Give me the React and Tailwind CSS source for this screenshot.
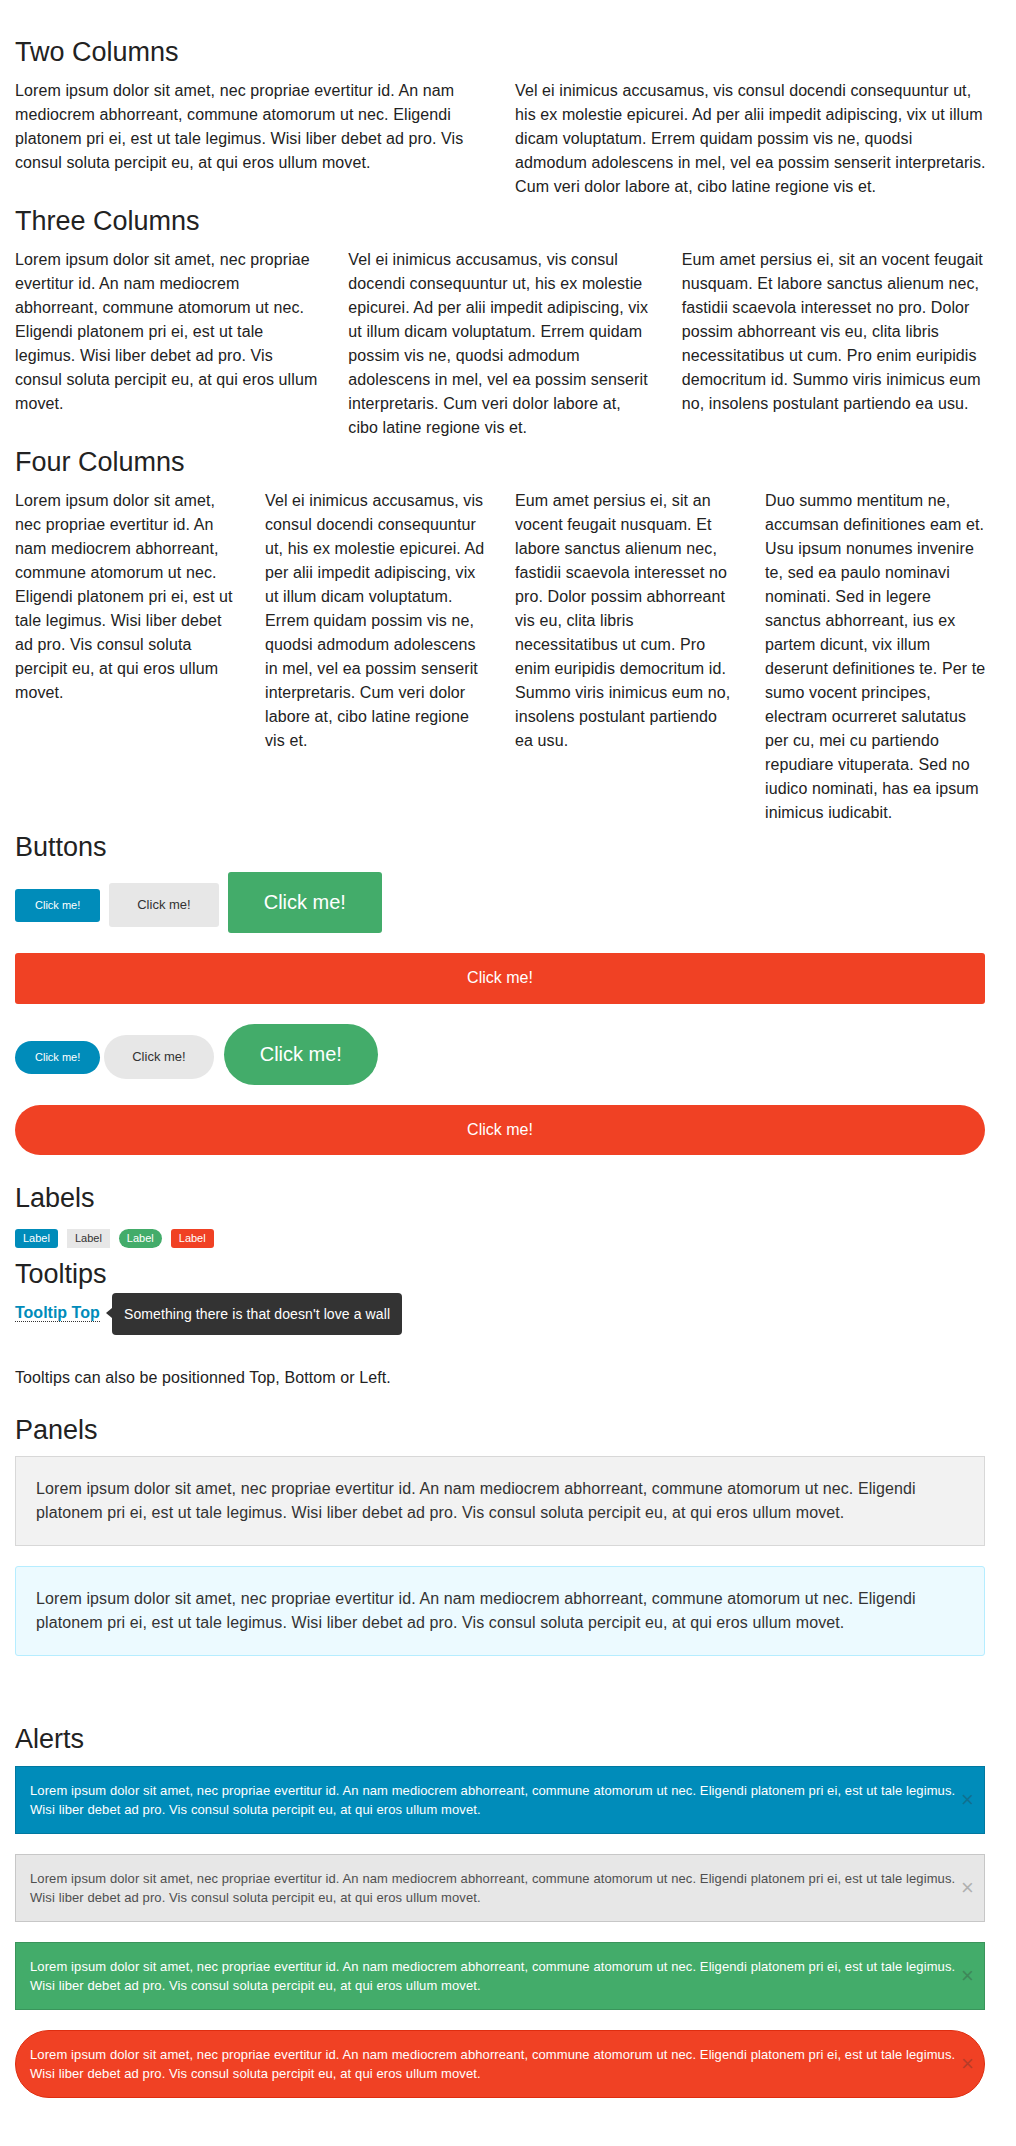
const LOREM_2 = [
  "Lorem ipsum dolor sit amet, nec propriae evertitur id. An nam",
  "mediocrem abhorreant, commune atomorum ut nec. Eligendi",
  "platonem pri ei, est ut tale legimus. Wisi liber debet ad pro. Vis",
  "consul soluta percipit eu, at qui eros ullum movet.",
];
const VEL_2 = [
  "Vel ei inimicus accusamus, vis consul docendi consequuntur ut,",
  "his ex molestie epicurei. Ad per alii impedit adipiscing, vix ut illum",
  "dicam voluptatum. Errem quidam possim vis ne, quodsi",
  "admodum adolescens in mel, vel ea possim senserit interpretaris.",
  "Cum veri dolor labore at, cibo latine regione vis et.",
];

const LOREM_3 = [
  "Lorem ipsum dolor sit amet, nec propriae",
  "evertitur id. An nam mediocrem",
  "abhorreant, commune atomorum ut nec.",
  "Eligendi platonem pri ei, est ut tale",
  "legimus. Wisi liber debet ad pro. Vis",
  "consul soluta percipit eu, at qui eros ullum",
  "movet.",
];
const VEL_3 = [
  "Vel ei inimicus accusamus, vis consul",
  "docendi consequuntur ut, his ex molestie",
  "epicurei. Ad per alii impedit adipiscing, vix",
  "ut illum dicam voluptatum. Errem quidam",
  "possim vis ne, quodsi admodum",
  "adolescens in mel, vel ea possim senserit",
  "interpretaris. Cum veri dolor labore at,",
  "cibo latine regione vis et.",
];
const EUM_3 = [
  "Eum amet persius ei, sit an vocent feugait",
  "nusquam. Et labore sanctus alienum nec,",
  "fastidii scaevola interesset no pro. Dolor",
  "possim abhorreant vis eu, clita libris",
  "necessitatibus ut cum. Pro enim euripidis",
  "democritum id. Summo viris inimicus eum",
  "no, insolens postulant partiendo ea usu.",
];

const LOREM_4 = [
  "Lorem ipsum dolor sit amet,",
  "nec propriae evertitur id. An",
  "nam mediocrem abhorreant,",
  "commune atomorum ut nec.",
  "Eligendi platonem pri ei, est ut",
  "tale legimus. Wisi liber debet",
  "ad pro. Vis consul soluta",
  "percipit eu, at qui eros ullum",
  "movet.",
];
const VEL_4 = [
  "Vel ei inimicus accusamus, vis",
  "consul docendi consequuntur",
  "ut, his ex molestie epicurei. Ad",
  "per alii impedit adipiscing, vix",
  "ut illum dicam voluptatum.",
  "Errem quidam possim vis ne,",
  "quodsi admodum adolescens",
  "in mel, vel ea possim senserit",
  "interpretaris. Cum veri dolor",
  "labore at, cibo latine regione",
  "vis et.",
];
const EUM_4 = [
  "Eum amet persius ei, sit an",
  "vocent feugait nusquam. Et",
  "labore sanctus alienum nec,",
  "fastidii scaevola interesset no",
  "pro. Dolor possim abhorreant",
  "vis eu, clita libris",
  "necessitatibus ut cum. Pro",
  "enim euripidis democritum id.",
  "Summo viris inimicus eum no,",
  "insolens postulant partiendo",
  "ea usu.",
];
const DUO_4 = [
  "Duo summo mentitum ne,",
  "accumsan definitiones eam et.",
  "Usu ipsum nonumes invenire",
  "te, sed ea paulo nominavi",
  "nominati. Sed in legere",
  "sanctus abhorreant, ius ex",
  "partem dicunt, vix illum",
  "deserunt definitiones te. Per te",
  "sumo vocent principes,",
  "electram ocurreret salutatus",
  "per cu, mei cu partiendo",
  "repudiare vituperata. Sed no",
  "iudico nominati, has ea ipsum",
  "inimicus iudicabit.",
];

const PANEL = [
  "Lorem ipsum dolor sit amet, nec propriae evertitur id. An nam mediocrem abhorreant, commune atomorum ut nec. Eligendi",
  "platonem pri ei, est ut tale legimus. Wisi liber debet ad pro. Vis consul soluta percipit eu, at qui eros ullum movet.",
];
const ALERT = [
  "Lorem ipsum dolor sit amet, nec propriae evertitur id. An nam mediocrem abhorreant, commune atomorum ut nec. Eligendi platonem pri ei, est ut tale legimus.",
  "Wisi liber debet ad pro. Vis consul soluta percipit eu, at qui eros ullum movet.",
];

function Lines({ lines }) {
  return lines.map((l, i) => (
    <span key={i} className="block whitespace-nowrap">
      {l}
    </span>
  ));
}

function Heading({ children, className = "" }) {
  return <h3 className={`px-[15px] text-[27px] leading-[42px] font-normal text-[#222] ${className}`}>{children}</h3>;
}

function Columns({ cols, items }) {
  return (
    <div className={`mt-[6px] grid ${cols}`}>
      {items.map((lines, i) => (
        <p key={i} className="px-[15px] text-[16px] leading-[24px] tracking-[0.1px] text-[#222]">
          <Lines lines={lines} />
        </p>
      ))}
    </div>
  );
}

function Alert({ className }) {
  return (
    <div className={`relative border pt-[14px] pb-[14px] pl-[14px] pr-[24px] text-[13px] leading-[19px] tracking-[0.1px] ${className}`}>
      <Lines lines={ALERT} />
      <span className="absolute right-[10px] top-1/2 -translate-y-1/2 text-[22px] leading-[20px] text-[#333] opacity-30">
        ×
      </span>
    </div>
  );
}

export default function App() {
  return (
    <div className="w-[1000px] bg-white pt-[31px] pb-[49px] font-['Liberation_Sans',Arial,sans-serif] text-[#222]">
      <Heading>Two Columns</Heading>
      <Columns cols="grid-cols-2" items={[LOREM_2, VEL_2]} />

      <Heading className="mt-px">Three Columns</Heading>
      <Columns cols="grid-cols-3" items={[LOREM_3, VEL_3, EUM_3]} />

      <Heading className="mt-px">Four Columns</Heading>
      <Columns cols="grid-cols-4" items={[LOREM_4, VEL_4, EUM_4, DUO_4]} />

      <Heading className="mt-px">Buttons</Heading>
      <div className="px-[15px]">
        <div className="mt-[4px] flex items-baseline">
          <button className="rounded-[3px] bg-[#008cba] px-[20px] pt-[10px] pb-[11px] text-[11px] leading-[12px] text-white">
            Click me!
          </button>
          <button className="ml-[9px] rounded-[3px] bg-[#e7e7e7] px-[28px] pt-[14px] pb-[15px] text-[13px] leading-[15px] text-[#333]">
            Click me!
          </button>
          <button className="ml-[9px] rounded-[3px] bg-[#43ac6a] px-[36px] pt-[18px] pb-[19px] text-[20px] leading-[24px] text-white">
            Click me!
          </button>
        </div>
        <button className="mt-[20px] block w-full rounded-[3px] bg-[#f04124] pt-[16px] pb-[17px] text-[16px] leading-[18px] text-white">
          Click me!
        </button>
        <div className="mt-[20px] flex items-baseline">
          <button className="rounded-full bg-[#008cba] px-[20px] pt-[10px] pb-[11px] text-[11px] leading-[12px] text-white">
            Click me!
          </button>
          <button className="ml-[4px] rounded-full bg-[#e7e7e7] px-[28px] pt-[14px] pb-[15px] text-[13px] leading-[15px] text-[#333]">
            Click me!
          </button>
          <button className="ml-[10px] rounded-full bg-[#43ac6a] px-[36px] pt-[18px] pb-[19px] text-[20px] leading-[24px] text-white">
            Click me!
          </button>
        </div>
        <button className="mt-[20px] block w-full rounded-full bg-[#f04124] pt-[16px] pb-[16px] text-[16px] leading-[18px] text-white">
          Click me!
        </button>
      </div>

      <Heading className="mt-[22px]">Labels</Heading>
      <div className="mt-[10px] flex gap-[9px] px-[15px]">
        <span className="rounded-[3px] bg-[#008cba] px-[8px] py-[4px] text-[11px] leading-[11px] text-white">Label</span>
        <span className="bg-[#e7e7e7] px-[8px] py-[4px] text-[11px] leading-[11px] text-[#333]">Label</span>
        <span className="rounded-full bg-[#43ac6a] px-[8px] py-[4px] text-[11px] leading-[11px] text-white">Label</span>
        <span className="rounded-[3px] bg-[#f04124] px-[8px] py-[4px] text-[11px] leading-[11px] text-white">Label</span>
      </div>

      <Heading className="mt-[5px]">Tooltips</Heading>
      <div className="relative mt-[6px] px-[15px] text-[16px] leading-[24px]">
        <span className="border-b border-dotted border-[#333] font-bold text-[#008cba]">Tooltip Top</span>
        <span className="absolute left-[106px] top-[7px] h-0 w-0 border-y-[5px] border-r-[6px] border-y-transparent border-r-[#333]" />
        <span className="absolute left-[112px] top-[-8px] rounded-[4px] bg-[#333] px-[12px] py-[12px] text-[14px] leading-[18px] tracking-[0.1px] whitespace-nowrap text-white">
          Something there is that doesn't love a wall
        </span>
      </div>
      <p className="mt-[41px] px-[15px] text-[16px] leading-[24px] tracking-[0.1px]">
        Tooltips can also be positionned Top, Bottom or Left.
      </p>

      <Heading className="mt-[19px]">Panels</Heading>
      <div className="px-[15px]">
        <div className="mt-[5px] border border-[#d8d8d8] bg-[#f2f2f2] p-[20px] text-[16px] leading-[24px] tracking-[0.1px] text-[#333]">
          <Lines lines={PANEL} />
        </div>
        <div className="mt-[20px] rounded-[3px] border border-[#b6edff] bg-[#ecfaff] p-[20px] text-[16px] leading-[24px] tracking-[0.1px] text-[#333]">
          <Lines lines={PANEL} />
        </div>
      </div>

      <Heading className="mt-[62px]">Alerts</Heading>
      <div className="mt-[6px] flex flex-col gap-[20px] px-[15px]">
        <Alert className="border-[#0078a0] bg-[#008cba] text-white" />
        <Alert className="border-[#c7c7c7] bg-[#e7e7e7] text-[#4f4f4f]" />
        <Alert className="border-[#3a945b] bg-[#43ac6a] text-white" />
        <Alert className="rounded-full border-[#de2d0f] bg-[#f04124] text-white" />
      </div>
    </div>
  );
}
